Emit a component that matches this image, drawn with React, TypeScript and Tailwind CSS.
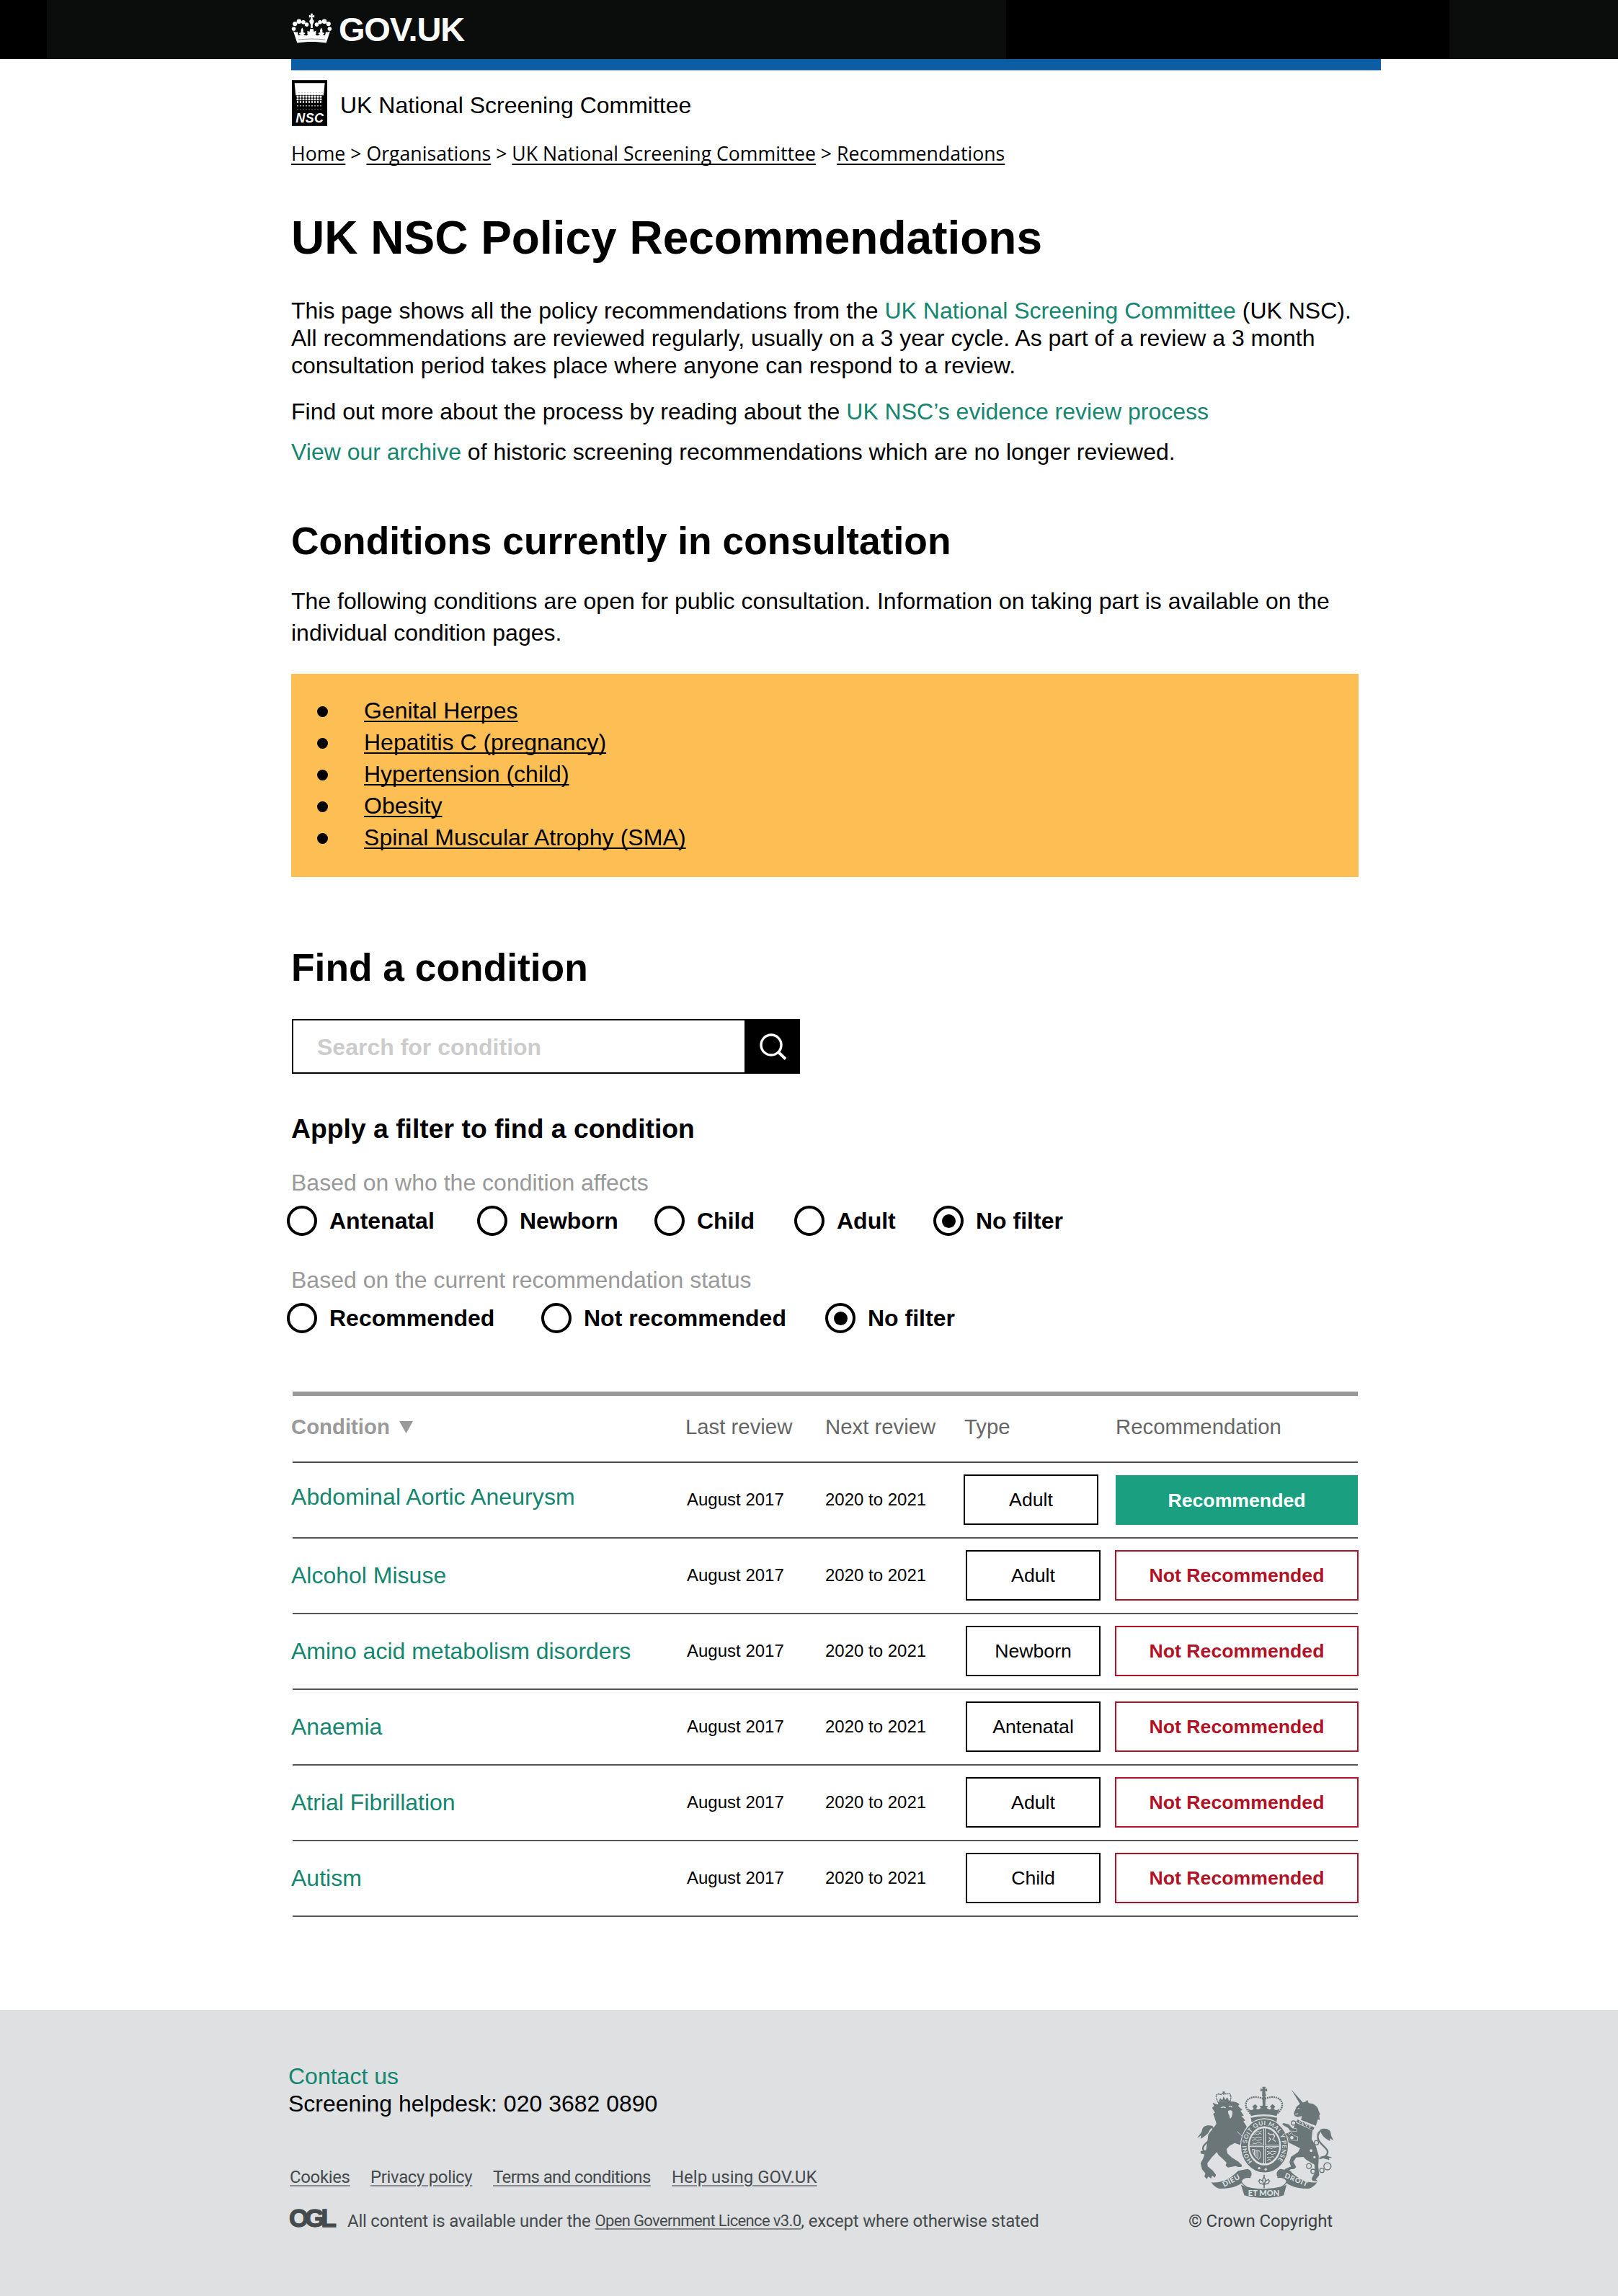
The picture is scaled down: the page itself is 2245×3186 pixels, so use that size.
import React from "react";

const links = ["Genital Herpes", "Hepatitis C (pregnancy)", "Hypertension (child)", "Obesity", "Spinal Muscular Atrophy (SMA)"];

const rows = [
  { name: "Abdominal Aortic Aneurysm", type: "Adult", recommended: true },
  { name: "Alcohol Misuse", type: "Adult", recommended: false },
  { name: "Amino acid metabolism disorders", type: "Newborn", recommended: false },
  { name: "Anaemia", type: "Antenatal", recommended: false },
  { name: "Atrial Fibrillation", type: "Adult", recommended: false },
  { name: "Autism", type: "Child", recommended: false },
];

function CrownHalf() {
  return (
    <>
      <circle cx="33" cy="90" r="8.5" />
      <circle cx="38" cy="69" r="9.5" />
      <circle cx="55" cy="59" r="10" />
      <circle cx="73" cy="62" r="8.5" />
      <circle cx="87" cy="72" r="8.5" />
      <path d="M31 100c6 4 12 5 18 3l3 14c5 1 9-1 10-5-5 2-8-2-6-5l8-3c-3-6 0-12 4-19 4 7 7 13 4 19l8 3c2 4-1 6-6 5 2 5 8 7 14 5l5-5h-3V98l9 4 2-11h8v53c-22 0-43 2-62 5z" />
    </>
  );
}

function Crown() {
  return (
    <svg viewBox="22 24 172 126" className="h-[42px] w-[57px]" fill="#fff">
      <path d="M103 26h10l-2 9 8-3v11l-8-3 1 10c6 3 7 9 4 14l-4 7v16h-8V71l-4-7c-3-5-2-11 4-14l1-10-8 3V32l8 3z" />
      <CrownHalf />
      <g transform="translate(216 0) scale(-1 1)"><CrownHalf /></g>
      <path d="M51 136c38-5 76-5 114 0" stroke="#0b0c0c" strokeWidth="2" fill="none" opacity=".7" />
    </svg>
  );
}

function NscLogo() {
  const holes = [
    { y: 355, r: 1.2 }, { y: 366, r: 1.9 }, { y: 377, r: 2.8 },
  ];
  const dots = [
    { y: 372, r: 4.4 }, { y: 383, r: 4.2 }, { y: 394, r: 3.5 }, { y: 410, r: 2.2 }, { y: 424, r: 1.4 },
  ];
  const cols = [52, 64, 76, 88, 100, 112, 124, 136, 148];
  return (
    <svg viewBox="28 303 147 191" className="h-16 w-[49px]">
      <rect x="28" y="303" width="147" height="191" fill="#000" />
      <path d="M39 315H165L160 366H44z" fill="#fff" />
      {holes.slice(0, 2).map((d) => cols.map((x) => <circle key={`h${x}-${d.y}`} cx={x + 6} cy={d.y} r={d.r} fill="#000" />))}
      {dots.map((d) => cols.map((x) => <rect key={`${x}-${d.y}`} x={x - d.r} y={d.y - d.r} width={d.r * 2} height={d.r * 2} rx={d.r * 0.6} fill="#fff" />))}
      <text x="44" y="481" fill="#fff" fontSize="54" fontWeight="700" fontStyle="italic" fontFamily="Liberation Sans, sans-serif" textLength="116">NSC</text>
    </svg>
  );
}

function Crest() {
  const c = "#6b7678";
  const bg = "#dee0e2";
  return (
    <svg viewBox="110 65 590 480" className="h-40 w-[197px]" fill={c}>
      {/* crown above the shield */}
      <path d="M393 76h14l-3 10 9-3v13l-9-3 3 12h-16l3-12-9 3V83l9 3z" />
      <circle cx="400" cy="111" r="8" />
      <path d="M393 118h14l-2 42h-10z" />
      <path d="M396 126C366 112 328 118 324 148c-1 14 8 28 18 38" fill="none" stroke={c} strokeWidth="7" strokeDasharray="6 3" />
      <path d="M404 126c30-14 68-8 72 22 1 14-8 28-18 38" fill="none" stroke={c} strokeWidth="7" strokeDasharray="6 3" />
      <path d="M333 166c12 10 20 8 24 0l-6-8 12-10 10 10-6 10c8 4 14 2 20-4l-6-8 18-2 18 2-6 8c6 6 12 8 20 4l-6-10 10-10 12 10-6 8c4 8 12 10 24 0l-13 32c-34-9-72-9-106 0z" />
      <path d="M345 203c34-10 76-10 110 0l-3 20c-34-8-70-8-104 0z" />
      <path d="M346 203c36-9 72-9 108 0" stroke={bg} strokeWidth="4" fill="none" />

      {/* lion */}
      <path d="M207 140c14-5 38-7 54-5l3 9c-18-2-38 0-54 5z" />
      <path d="M209 138c-7-10-11-22-5-29 5-5 12-4 15 1M259 134c4-9 4-20 0-26-5-6-12-4-15 0M219 110c4-6 9-6 13-3 5-3 9-2 12 1" fill="none" stroke={c} strokeWidth="5" strokeDasharray="5 2" />
      <path d="M228 96h9v10h-9zM212 136l6-13 8 9 6-16 7 14 8-10 7 14z" />
      <path d="M206 150c18-10 50-17 78-10l14 8-6 8 18 16-8 4 14 20-10 2 16 18-8 4 12 18c6 12 0 24-8 26l10 20 8 24-4 20 10 8-4 10-10-4-6 8-12-10-10-22-22-8-22 12-12 14 4 18 18 16 28 18 14 14-2 8h-14l-10-4-32 6-10-8 4-12-14-14-20-18-6-12-20 20-20 26 2 14 20 16 14 18-4 12-12-8-4 12-12-8-6 10-10-10 4-14-14-16-6-26 10-18 12-32 6-38 4-32 24-30 10-14-8-26-6-16 8-4-12-20 8-8-6-14z" />
      <path d="M222 164c6-5 14-5 18 0M253 158c6-3 12-1 14 4" stroke={bg} strokeWidth="4" fill="none" />
      <path d="M250 178c4-6 14-6 18 0 2 10-2 26-8 30-4-2-2-14-8-18z" fill={bg} />
      <path d="M288 262l30 30" stroke={bg} strokeWidth="2.5" fill="none" />
      <path d="M176 348c-26 6-34-10-28-24 6-16 42-30 46-56 2-18-10-26-24-24" fill="none" stroke={c} strokeWidth="7" />
      <path d="M188 240c-24-8-44 0-46 18-2 12-10 14-20 32l16-12-2 14c16-8 34-22 38-36zM136 344l34-6 10 18-24 10-2-8-18-4z" />

      {/* unicorn */}
      <path d="M513 87l52 58-12 8z" />
      <path d="M524 186l12-28 18-14 20-6 6-8 6 14c24 2 38 14 42 34l6 12-4 4 2 20-8-2-8 26-62-24 4-16-18 4-12-4z" />
      <path d="M540 168l8-3M530 190l12-2" stroke={bg} strokeWidth="3" />
      <path d="M540 212l70 34-6 12-70-36z" />
      <path d="M546 210l4 16 8-10 4 18 10-12 4 18 10-10 4 17 10-12" stroke={bg} strokeWidth="3" fill="none" />
      <path d="M534 226l68 32-4 36 18 30 12 40-2 44 4 36-14 18 8 8-22-2-4-10 14-24-2-34-34-20-12-12-30 2-12 18 12 22-8 8-16 2-26 22-10-2 14-22 24-10-6-18 6-22 30-20 8-16-28-14-24-12-10-20 10-16 20-14z" />
      <path d="M630 374c30-2 42-24 30-38-14-18-40-32-36-56 2-18 18-28 34-22" fill="none" stroke={c} strokeWidth="7" />
      <path d="M634 254c22-10 44 0 44 16 0 10 4 14 12 30l-16-10 2 12c-18-8-34-22-38-34zM632 368l24-6 28 8-14 3 2 8-22-6z" />
      {[[523, 227, 9], [618, 309, 9], [596, 342, 8], [610, 369, 7], [587, 406, 10], [604, 428, 9], [641, 424, 9], [664, 407, 15]].map(([x, y, r], i) => (
        <circle key={i} cx={x} cy={y} r={r} fill={bg} stroke={c} strokeWidth="4" />
      ))}

      {/* garter and shield */}
      <ellipse cx="402" cy="322" rx="101" ry="115" fill={bg} />
      <ellipse cx="402" cy="322" rx="83" ry="96" fill="none" stroke={c} strokeWidth="29" />
      <path id="garter" d="M352 387A74 87 0 1 1 452 387" fill="none" />
      <text fill={bg} fontSize="25" fontWeight="700" fontFamily="Lato, sans-serif">
        <textPath href="#garter" textLength="385">HONI SOIT QUI MAL Y PENSE</textPath>
      </text>
      <circle cx="380" cy="415" r="5" fill={bg} />
      <circle cx="407" cy="420" r="5" fill={bg} />
      <ellipse cx="402" cy="322" rx="62" ry="73" />
      <path d="M402 249v146M340 322h124" stroke={bg} strokeWidth="9" />
      <path d="M402 249v146M340 322h124" stroke={c} strokeWidth="3" />
      <path d="M354 276l10-5 8 5 10-6 8 3M350 288l14 2 10-4 16 3M350 300l12-5 10 5 18-5M352 311l14 1 10-4 14 4M412 334l10-5 8 5 12-6 10 3M412 346l14 2 10-4 16 3M412 358l12-5 10 5 14-5M412 370l12 1 10-4 8 2M366 266l8-4 8 3 8-5M412 382l10-3 8 2" stroke={bg} strokeWidth="3" fill="none" />
      <path d="M352 336l30 8c6 14 4 28-4 34-14-8-24-24-26-42zM360 340v22M367 342v28M374 344v30" stroke={bg} strokeWidth="3" fill="none" />
      <path d="M416 268l12 8 12-4 4 12-8 10 12 10M420 288l8 6-10 12M438 276l8 4" stroke={bg} strokeWidth="3.5" fill="none" />

      {/* unicorn forelegs crossing the garter */}
      <path d="M536 262l-28-2-8-12-18-10-8-8 8-4 22 6 14 16 18 2zM540 300l-32-2-10-14-12-14 12-2 8 8 8-10 8 12 18 6z" stroke={bg} strokeWidth="2" />
      <circle cx="516" cy="288" r="9" fill={bg} stroke={c} strokeWidth="4" />

      {/* plant badge and ribbon */}
      <path d="M398 442h5v56h-5zM374 466h52v4h-52z" />
      <path d="M400 452c-8 8-6 20 0 30 6-10 8-22 0-30zM398 482c-18-2-22-10-16-20 10 2 16 10 16 20zM403 482c18-2 22-10 16-20-10 2-16 10-16 20z" fill={bg} stroke={c} strokeWidth="4" />
      <path d="M180 474c46 4 80-14 112-48l40-8c18 6 18 22 14 32l-22 8c-14 28-60 44-110 42-14-4-24-12-34-26z" />
      <path d="M621 474c-46 4-80-14-112-48l-40-8c-18 6-18 22-14 32l22 8c14 28 60 44 110 42 14-4 24-12 34-26z" />
      <path d="M344 454c-22-4-40 6-38 18 2 10 14 14 24 24M456 454c22-4 40 6 38 18-2 10-14 14-24 24" fill={bg} stroke={c} strokeWidth="4" />
      <path d="M304 484c50 22 140 22 190 0l-12 44c-44 14-120 14-164 0z" />
      <g fill={bg} fontWeight="900" fontFamily="Lato, sans-serif">
        <text transform="translate(234 493) rotate(-27)" textLength="76" fontSize="30">DIEU</text>
        <text transform="translate(334 531)" textLength="130" fontSize="33">ET MON</text>
        <text transform="translate(484 453) rotate(23)" textLength="100" fontSize="29">DROIT</text>
      </g>
    </svg>
  );
}

function Radio({ label, checked, className = "" }: { label: string; checked?: boolean; className?: string }) {
  return (
    <label className={`flex items-center gap-[17px] ${className}`}>
      <span className="flex size-[42px] shrink-0 items-center justify-center rounded-full border-4 border-black bg-white">
        {checked && <span className="size-[19px] rounded-full bg-black" />}
      </span>
      <span className="text-[32px] leading-[42px] font-bold whitespace-nowrap">{label}</span>
    </label>
  );
}

const crumb = "underline decoration-2 underline-offset-[4px] [text-decoration-skip-ink:none]";
const footLink = "underline decoration-2 decoration-[#85898b] underline-offset-[3px]";

export default function App() {
  return (
    <div className="flex h-[3186px] w-[2245px] flex-col overflow-hidden bg-white font-['Liberation_Sans',Arial,sans-serif] text-black">
      <header className="flex h-[82px] shrink-0 bg-[#0b0c0c]">
        <div className="w-[65px] bg-black" />
        <div className="flex w-[1331px] items-start pl-[339px]">
          <div className="mt-[18px]"><Crown /></div>
          <span className="ml-[9px] text-[47px] leading-[82px] font-bold tracking-[-1.2px] text-white">GOV.UK</span>
        </div>
        <div className="w-[615px] bg-black" />
      </header>

      <main className="ml-[404px] flex w-[1512px] flex-col">
        <div className="h-4 border-b border-[#8fb4d6] bg-[#0b5ea3]" />
        <div className="mt-[13px] flex h-16 items-start pl-[1px]">
          <NscLogo />
          <span className="ml-[18px] text-[32px] leading-[70px]">UK National Screening Committee</span>
        </div>
        <nav className="mt-5 font-['Open_Sans',sans-serif] text-[26.67px] leading-9 whitespace-nowrap">
          <a className={crumb}>Home</a> &gt; <a className={crumb}>Organisations</a> &gt; <a className={crumb}>UK National Screening Committee</a> &gt; <a className={crumb}>Recommendations</a>
        </nav>

        <h1 className="mt-[63px] text-[64px] leading-[72px] font-bold">UK NSC Policy Recommendations</h1>
        <p className="mt-[46px] text-[32px] leading-[38px] whitespace-nowrap">
          This page shows all the policy recommendations from the <a className="text-[#14866f]">UK National Screening Committee</a> (UK NSC).<br />
          All recommendations are reviewed regularly, usually on a 3 year cycle. As part of a review a 3 month<br />
          consultation period takes place where anyone can respond to a review.
        </p>
        <p className="mt-[26px] text-[32px] leading-[38px]">Find out more about the process by reading about the <a className="text-[#14866f]">UK NSC’s evidence review process</a></p>
        <p className="mt-[18px] text-[32px] leading-[38px]"><a className="text-[#14866f]">View our archive</a> of historic screening recommendations which are no longer reviewed.</p>

        <h2 className="mt-[75px] text-[53.33px] leading-[60px] font-bold">Conditions currently in consultation</h2>
        <p className="mt-[31px] text-[32px] leading-[44px] whitespace-nowrap">
          The following conditions are open for public consultation. Information on taking part is available on the<br />individual condition pages.
        </p>
        <ul className="mt-[35px] flex h-[282px] w-[1481px] flex-col bg-[#fdbe54] pt-[29px] pl-9">
          {links.map((l, i) => (
            <li key={l} className="flex h-11 items-center">
              <span className="mt-[3px] size-[15px] rounded-full bg-black" />
              <a className={`ml-[50px] text-[32px] leading-[44px] underline decoration-[2.3px] underline-offset-[3px] [text-decoration-skip-ink:none] ${i === 4 ? "tracking-[0.07px]" : ""}`}>{l}</a>
            </li>
          ))}
        </ul>

        <h2 className="mt-24 text-[53.33px] leading-[60px] font-bold">Find a condition</h2>
        <div className="mt-[41px] ml-[1px] flex h-[76px] w-[705px]">
          <div className="flex flex-1 items-center border-2 border-r-0 border-black pt-[1px] pl-[33px] text-[32px] font-bold text-[#ccc]">Search for condition</div>
          <button className="flex w-[77px] items-center justify-center bg-black">
            <svg viewBox="0 0 40 40" className="size-10" fill="none" stroke="#fff" strokeWidth="3.4">
              <circle cx="18" cy="18" r="14" />
              <path d="M28 28L38 37.5" strokeWidth="4" />
            </svg>
          </button>
        </div>

        <h3 className="mt-[54px] text-[37.33px] leading-[44px] font-bold">Apply a filter to find a condition</h3>
        <p className="mt-[35px] text-[32px] leading-9 text-[#999]">Based on who the condition affects</p>
        <div className="mt-[14px] -ml-[6px] flex">
          <Radio label="Antenatal" className="w-[264px]" />
          <Radio label="Newborn" className="w-[246px]" />
          <Radio label="Child" className="w-[194px]" />
          <Radio label="Adult" className="w-[193px]" />
          <Radio label="No filter" checked />
        </div>
        <p className="mt-[43px] text-[32px] leading-9 text-[#999]">Based on the current recommendation status</p>
        <div className="mt-[14px] -ml-[6px] flex">
          <Radio label="Recommended" className="w-[353px]" />
          <Radio label="Not recommended" className="w-[394px]" />
          <Radio label="No filter" checked />
        </div>

        <section className="mt-[81px] ml-[2px] w-[1478px] border-t-[6px] border-[#999]">
          <div className="grid h-[93px] grid-cols-[544px_194px_194px_209px_337px] border-b-2 border-[#4d4d4d] text-[29.33px] leading-[86px] text-[#666]">
            <span className="-ml-[2px] flex items-start font-bold text-[#999]">
              Condition
              <svg viewBox="0 0 19 17" className="mt-[35px] ml-[13px] h-[17px] w-[19px]" fill="#999"><path d="M0 0h19L9.5 17z" /></svg>
            </span>
            <span className="pl-[1px]">Last review</span>
            <span className="pl-[1px]">Next review</span>
            <span>Type</span>
            <span className="pl-[1px]">Recommendation</span>
          </div>
          {rows.map((r, i) => (
            <div key={r.name} className="grid h-[105px] grid-cols-[544px_194px_194px_209px_337px] border-b-2 border-[#555]">
              <a className={`-ml-[2px] text-[32px] text-[#14866f] ${i === 0 ? "leading-[94px] tracking-[0.1px]" : "leading-[103px]"}`}>{r.name}</a>
              <span className="pl-[3px] text-2xl leading-[101px]">August 2017</span>
              <span className="pl-[1px] text-2xl leading-[101px]">2020 to 2021</span>
              <span className={`mt-4 flex h-[70px] w-[187px] items-center justify-center border-2 border-black text-[26.67px] ${i === 0 ? "-ml-[1px]" : "ml-[2px]"}`}>{r.type}</span>
              {r.recommended ? (
                <span className="mt-[17px] ml-[1px] flex h-[69px] w-[336px] items-center justify-center bg-[#1a9f80] text-[26.67px] font-bold text-white">Recommended</span>
              ) : (
                <span className="mt-4 flex h-[70px] w-[338px] items-center justify-center border-2 border-[#b11226] text-[26.67px] font-bold text-[#b11226]">Not Recommended</span>
              )}
            </div>
          ))}
        </section>
      </main>

      <footer className="mt-[129px] flex flex-1 bg-[#dee0e2] pl-[400px]">
        <div className="w-[1249px] pt-[73px] text-[32px] leading-[38px]">
          <a className="block text-[#14866f]">Contact us</a>
          <p>Screening helpdesk: 020 3682 0890</p>
          <div className="mt-[67px] ml-[2px] flex font-['Roboto',sans-serif] text-2xl leading-8 whitespace-nowrap text-[#454a4c]">
            <span className="w-[112px] tracking-[-0.35px]"><a className={footLink}>Cookies</a></span>
            <span className="w-[170px] tracking-[-0.35px]"><a className={footLink}>Privacy policy</a></span>
            <span className="w-[248px] tracking-[-0.62px]"><a className={footLink}>Terms and conditions</a></span>
            <a className={footLink}>Help using GOV.UK</a>
          </div>
          <div className="mt-[29px] ml-[2px] flex items-start font-['Roboto',sans-serif] text-2xl leading-8 whitespace-nowrap text-[#454a4c]">
            <span className="-mt-[6px] -ml-[1px] w-[65px] font-['Liberation_Sans',Arial,sans-serif] text-[35px] leading-[36px] font-bold tracking-[-5px] [-webkit-text-stroke:1.3px_#454a4c]">OGL</span>
            <span className="ml-4 tracking-[-0.23px]">All content is available under the</span>
            <a className="ml-[6px] text-[22px] tracking-[-0.65px] underline decoration-2 decoration-[#85898b] underline-offset-[3px] [text-decoration-skip-ink:none]">Open Government Licence v3.0</a>
            <span className="tracking-[-0.2px]">, except where otherwise stated</span>
          </div>
        </div>
        <div className="flex w-[201px] flex-col pt-[103px]">
          <div className="ml-2"><Crest /></div>
          <span className="mt-[14px] font-['Roboto',sans-serif] text-2xl leading-8 tracking-[-0.1px] whitespace-nowrap text-[#3b4143]">© Crown Copyright</span>
        </div>
      </footer>
    </div>
  );
}
